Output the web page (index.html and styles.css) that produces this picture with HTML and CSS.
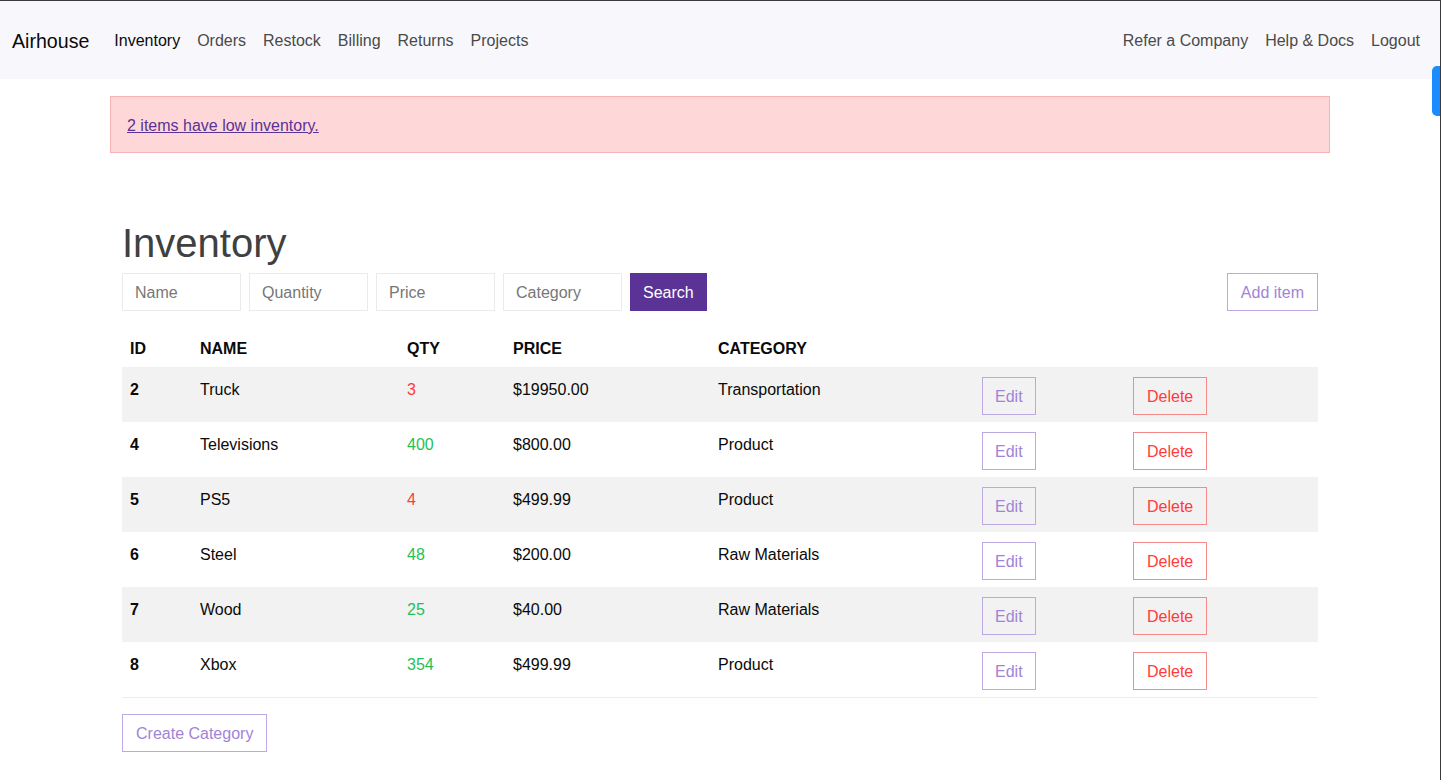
FILE: index.html
```html
<!DOCTYPE html>
<html lang="en">
<head>
<meta charset="utf-8">
<title>Airhouse - Inventory</title>
<link rel="stylesheet" href="styles.css">
</head>
<body>
<div class="frame">
  <nav class="navbar">
    <div class="nav-start">
      <a class="brand" href="#">Airhouse</a>
      <div class="nav-links">
        <a class="nav-link active" href="#">Inventory</a>
        <a class="nav-link" href="#">Orders</a>
        <a class="nav-link" href="#">Restock</a>
        <a class="nav-link" href="#">Billing</a>
        <a class="nav-link" href="#">Returns</a>
        <a class="nav-link" href="#">Projects</a>
      </div>
    </div>
    <div class="nav-links">
      <a class="nav-link" href="#">Refer a Company</a>
      <a class="nav-link" href="#">Help &amp; Docs</a>
      <a class="nav-link" href="#">Logout</a>
    </div>
  </nav>
  <div class="side-tab"></div>

  <main class="container">
    <div class="alert"><a href="#" class="alert-link">2 items have low inventory.</a></div>

    <section class="content">
      <h1 class="title">Inventory</h1>
      <div class="toolbar">
        <form class="search">
          <input class="field" type="text" placeholder="Name">
          <input class="field" type="text" placeholder="Quantity">
          <input class="field" type="text" placeholder="Price">
          <input class="field" type="text" placeholder="Category">
          <button class="btn btn-primary" type="button">Search</button>
        </form>
        <button class="btn btn-outline" type="button">Add item</button>
      </div>

      <table class="table">
        <colgroup>
          <col class="c-id"><col class="c-name"><col class="c-qty"><col class="c-price"><col class="c-cat"><col class="c-edit"><col class="c-del">
        </colgroup>
        <thead>
          <tr><th>ID</th><th>Name</th><th>Qty</th><th>Price</th><th>Category</th><th></th><th></th></tr>
        </thead>
        <tbody>
          <tr><td class="id">2</td><td>Truck</td><td class="low">3</td><td>$19950.00</td><td>Transportation</td><td><button class="btn btn-outline btn-edit">Edit</button></td><td><button class="btn btn-danger">Delete</button></td></tr>
          <tr><td class="id">4</td><td>Televisions</td><td class="ok">400</td><td>$800.00</td><td>Product</td><td><button class="btn btn-outline btn-edit">Edit</button></td><td><button class="btn btn-danger">Delete</button></td></tr>
          <tr><td class="id">5</td><td>PS5</td><td class="low">4</td><td>$499.99</td><td>Product</td><td><button class="btn btn-outline btn-edit">Edit</button></td><td><button class="btn btn-danger">Delete</button></td></tr>
          <tr><td class="id">6</td><td>Steel</td><td class="ok">48</td><td>$200.00</td><td>Raw Materials</td><td><button class="btn btn-outline btn-edit">Edit</button></td><td><button class="btn btn-danger">Delete</button></td></tr>
          <tr><td class="id">7</td><td>Wood</td><td class="ok">25</td><td>$40.00</td><td>Raw Materials</td><td><button class="btn btn-outline btn-edit">Edit</button></td><td><button class="btn btn-danger">Delete</button></td></tr>
          <tr><td class="id">8</td><td>Xbox</td><td class="ok">354</td><td>$499.99</td><td>Product</td><td><button class="btn btn-outline btn-edit">Edit</button></td><td><button class="btn btn-danger">Delete</button></td></tr>
        </tbody>
      </table>

      <button class="btn btn-outline create" type="button">Create Category</button>
    </section>
  </main>
</div>
</body>
</html>
```

FILE: styles.css
```css
* { box-sizing: border-box; }

html, body {
  margin: 0;
  padding: 0;
  background: #ffffff;
}

body {
  font-family: "Liberation Sans", Arial, sans-serif;
  font-size: 16px;
  line-height: 24px;
  color: #0a0a0a;
}

.frame {
  position: relative;
  min-height: 100vh;
  border-top: 1px solid #3a3a3a;
  border-right: 1px solid #3a3a3a;
}

.side-tab {
  position: absolute;
  top: 65px;
  right: 0;
  width: 8px;
  height: 50px;
  background: #1a8cff;
  border-radius: 5px 0 0 5px;
}

/* Navbar */
.navbar {
  height: 78px;
  background: #f8f8fc;
  display: flex;
  align-items: center;
  justify-content: space-between;
  padding: 2px 20px 0 12px;
}

.nav-start {
  display: flex;
  align-items: center;
}

.brand {
  font-size: 19.6px;
  color: #0a0a0a;
  text-decoration: none;
  margin-right: 25px;
}

.nav-links {
  display: flex;
  align-items: center;
  gap: 17px;
}

.nav-link {
  color: #4a4a4a;
  text-decoration: none;
}

.nav-link.active {
  color: #0a0a0a;
}

/* Main */
.container {
  width: 1220px;
  margin: 0 auto;
  padding-top: 17px;
  padding-bottom: 30px;
}

.alert {
  background: #fed8d8;
  border: 1px solid #f8b4b4;
  padding: 17px 16px 14px;
}

.alert-link {
  color: #5b3296;
  text-decoration: underline;
}

.content {
  padding: 0 12px;
}

.title {
  margin: 66px 0 6px;
  font-size: 40px;
  line-height: 48px;
  font-weight: 400;
  color: #404040;
}

.toolbar {
  display: flex;
  justify-content: space-between;
  align-items: center;
}

.search {
  display: flex;
  gap: 8px;
  margin: 0;
}

.field {
  width: 119px;
  height: 38px;
  border: 1px solid #ebebeb;
  padding: 2px 12px 0;
  font: inherit;
  color: #363636;
  background: #fff;
  border-radius: 0;
  outline: none;
}

.field::placeholder {
  color: #777777;
}

.btn {
  height: 38px;
  padding: 2px 13px 0;
  font: inherit;
  border-radius: 0;
  cursor: pointer;
  background: #fff;
}

.btn-primary {
  background: #5b3396;
  border: 1px solid #5b3396;
  color: #ffffff;
  padding: 2px 12px 0;
}

.btn-outline {
  border: 1px solid #bca9e3;
  color: #a184d6;
  background: transparent;
}

.btn-edit {
  padding: 2px 12px 0;
}

.btn-danger {
  border: 1px solid #f48a8a;
  color: #ff3b3b;
  background: transparent;
}

/* Table */
.table {
  width: 100%;
  margin-top: 19px;
  border-collapse: collapse;
  table-layout: fixed;
}

.c-id { width: 70px; }
.c-name { width: 207px; }
.c-qty { width: 106px; }
.c-price { width: 205px; }
.c-cat { width: 264px; }
.c-edit { width: 151px; }
.c-del { width: 193px; }

.table th {
  text-align: left;
  text-transform: uppercase;
  font-weight: 700;
  padding: 7px 8px 6px;
  color: #0a0a0a;
}

.table td {
  padding: 11px 8px 6px;
  vertical-align: top;
  height: 55px;
}

.table td .btn {
  margin-top: -1px;
}

.table tbody tr:nth-child(odd) {
  background: #f2f2f2;
}

.table tbody tr:last-child {
  border-bottom: 1px solid #ececec;
}

.table td.id {
  font-weight: 700;
}

.table td.low {
  color: #ff3b3b;
}

.table td.ok {
  color: #1fc157;
}

.create {
  margin-top: 16px;
}
```
